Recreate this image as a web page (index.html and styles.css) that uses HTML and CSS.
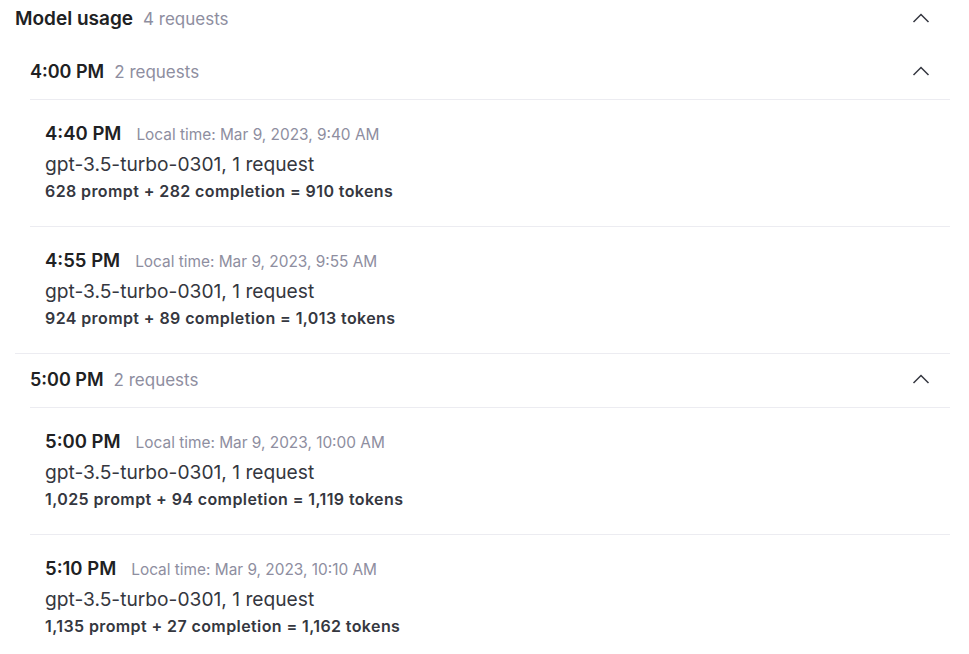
FILE: index.html
```html
<!DOCTYPE html>
<html lang="en">
<head>
    <meta charset="UTF-8">
    <title>Model usage</title>
    <link rel="stylesheet" href="styles.css">
</head>
<body>
    <div class="usage">
        <div class="usage-head">
            <div class="head-title">
                <span class="title">Model usage</span>
                <span class="count">4 requests</span>
            </div>
            <svg class="chevron" width="18" height="10" viewBox="0 0 18 10"><path d="M1.5 9 L9 1.5 L16.5 9"/></svg>
        </div>

        <!-- 4:00 PM -->
        <div class="group">
            <div class="group-head">
                <div class="head-title">
                    <span class="group-time">4:00 PM</span>
                    <span class="count">2 requests</span>
                </div>
                <svg class="chevron" width="18" height="10" viewBox="0 0 18 10"><path d="M1.5 9 L9 1.5 L16.5 9"/></svg>
            </div>
            <div class="entry">
                <div class="entry-time"><span class="time">4:40 PM</span><span class="local">Local time: Mar 9, 2023, 9:40 AM</span></div>
                <div class="model">gpt-3.5-turbo-0301, 1 request</div>
                <div class="tokens">628 prompt + 282 completion = 910 tokens</div>
            </div>
            <div class="entry">
                <div class="entry-time"><span class="time">4:55 PM</span><span class="local">Local time: Mar 9, 2023, 9:55 AM</span></div>
                <div class="model">gpt-3.5-turbo-0301, 1 request</div>
                <div class="tokens">924 prompt + 89 completion = 1,013 tokens</div>
            </div>
        </div>

        <!-- 5:00 PM -->
        <div class="group">
            <div class="group-head">
                <div class="head-title">
                    <span class="group-time">5:00 PM</span>
                    <span class="count">2 requests</span>
                </div>
                <svg class="chevron" width="18" height="10" viewBox="0 0 18 10"><path d="M1.5 9 L9 1.5 L16.5 9"/></svg>
            </div>
            <div class="entry">
                <div class="entry-time"><span class="time">5:00 PM</span><span class="local">Local time: Mar 9, 2023, 10:00 AM</span></div>
                <div class="model">gpt-3.5-turbo-0301, 1 request</div>
                <div class="tokens">1,025 prompt + 94 completion = 1,119 tokens</div>
            </div>
            <div class="entry">
                <div class="entry-time"><span class="time">5:10 PM</span><span class="local">Local time: Mar 9, 2023, 10:10 AM</span></div>
                <div class="model">gpt-3.5-turbo-0301, 1 request</div>
                <div class="tokens">1,135 prompt + 27 completion = 1,162 tokens</div>
            </div>
        </div>
    </div>
</body>
</html>
```

FILE: styles.css
```css
body {
    margin: 0;
    background-color: #fff;
    font-family: Inter, "Noto Sans", sans-serif;
    color: #353740;
}
.usage {
    width: 935px;
    margin-left: 15px;
}
.usage-head {
    display: flex;
    align-items: center;
    justify-content: space-between;
    height: 36px;
    margin-bottom: 10px;
    padding-right: 20px;
}
.head-title {
    display: flex;
    align-items: baseline;
    gap: 10px;
}
.title {
    font-size: 19px;
    font-weight: 600;
    color: #202123;
}
.count {
    font-size: 17px;
    color: #8e8ea0;
}
.chevron {
    fill: none;
    stroke: #353740;
    stroke-width: 1.5;
}
.group {
    border-bottom: 1px solid #ececf1;
    padding-left: 15px;
}
.group-head {
    display: flex;
    align-items: center;
    justify-content: space-between;
    height: 50px;
    padding: 0 20px 3px 0;
    border-bottom: 1px solid #ececf1;
}
.group-time {
    font-size: 18px;
    font-weight: 600;
    color: #202123;
}
.entry {
    padding: 20px 0 24px 15px;
    border-bottom: 1px solid #ececf1;
}
.entry:last-child {
    border-bottom: none;
}
.entry-time {
    display: flex;
    align-items: baseline;
    gap: 15px;
    height: 26px;
    line-height: 26px;
}
.time {
    font-size: 18.5px;
    font-weight: 600;
    color: #202123;
}
.local {
    font-size: 15.4px;
    color: #8e8ea0;
}
.model {
    margin-top: 4px;
    font-size: 19.2px;
    line-height: 28px;
    color: #353740;
}
.tokens {
    margin-top: 2px;
    font-size: 16px;
    font-weight: 600;
    letter-spacing: 0.4px;
    line-height: 22px;
    color: #353740;
}
```
